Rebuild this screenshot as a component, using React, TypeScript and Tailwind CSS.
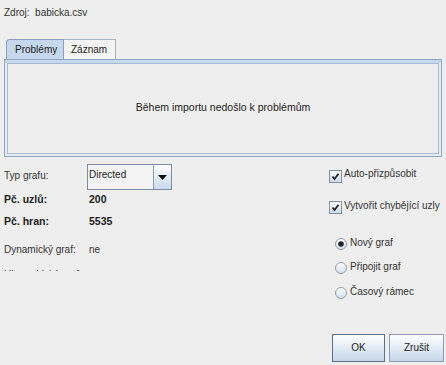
import React from "react";

const font = { fontFamily: '"Liberation Sans", Arial, sans-serif' };

function Checkbox() {
  return (
    <svg width="13" height="13" viewBox="0 0 13 13" className="shrink-0">
      <defs>
        <linearGradient id="cbg" x1="0" y1="0" x2="0" y2="1">
          <stop offset="0" stopColor="#ffffff" />
          <stop offset="1" stopColor="#c9d8ea" />
        </linearGradient>
      </defs>
      <rect x="0.5" y="0.5" width="12" height="12" fill="url(#cbg)" stroke="#7f8fa4" />
      <path d="M3.5 6.5 L5.5 9 L9.5 3.8" fill="none" stroke="#222" strokeWidth="1.8" />
    </svg>
  );
}

function Radio({ on }: { on?: boolean }) {
  return (
    <svg width="12" height="12" viewBox="0 0 12 12" className="shrink-0">
      <defs>
        <linearGradient id="rbg" x1="0" y1="0" x2="0" y2="1">
          <stop offset="0" stopColor="#ffffff" />
          <stop offset="1" stopColor="#d3deeb" />
        </linearGradient>
      </defs>
      <circle cx="6" cy="6" r="5.5" fill="url(#rbg)" stroke="#8e9db0" />
      {on && <circle cx="6" cy="6" r="2.8" fill="#222" />}
    </svg>
  );
}

export default function App() {
  return (
    <div
      className="w-[446px] h-[365px] bg-[#eeeeee] overflow-hidden text-[10px] text-[#333333] flex flex-col"
      style={font}
    >
      <div className="h-[26px] pl-[4px] pt-[7px] leading-[12px]">Zdroj:&nbsp; babicka.csv</div>

      <div className="mt-[13px] px-[4px]">
        <div className="flex pl-[2px] h-[20px]">
          <div className="w-[58px] border border-b-0 border-[#8ca0bd] bg-[#c5d8ee] rounded-tl-[4px] flex items-center pl-[8px] pb-[1px] text-[#222]">
            Problémy
          </div>
          <div className="w-[52px] border border-b-0 border-l-0 border-[#a9b4c2] bg-[#f4f4f4] flex items-center pl-[7px] pb-[1px] text-[#222]">
            Záznam
          </div>
        </div>
        <div className="h-[98px] border border-[#92a6c2] bg-[#e6ebf2] flex flex-col px-[2px] pb-[2px]">
          <div className="h-[3px] bg-[#c5d8ee] -mx-[2px]" />
          <div className="flex-1 border border-[#a8bad2] bg-[#eeeeee] flex items-center justify-center pb-[2px] text-[#222] text-[10.5px]">
            Během importu nedošlo k problémům
          </div>
        </div>
      </div>

      <div className="flex mt-[7px] h-[160px]">
        <div className="w-[320px] h-[107px] overflow-hidden pl-[4px] flex flex-col">
          <div className="h-[26px] flex items-center shrink-0">
            <div className="w-[83px] pb-[3px]">Typ grafu:</div>
            <div className="w-[85px] h-[26px] border border-[#7d8c9e] bg-[#f3f3f3] flex">
              <div className="flex-1 pl-[1px] pt-[4px] leading-[12px] text-[#222]">Directed</div>
              <div className="w-[18px] border-l border-[#8d9bad] bg-gradient-to-b from-[#ffffff] to-[#c9d9ec] flex items-center justify-center">
                <svg width="9" height="5" viewBox="0 0 9 5">
                  <path d="M0 0 H9 L4.5 5 Z" fill="#111" />
                </svg>
              </div>
            </div>
          </div>
          <div className="h-[20px] flex items-center shrink-0 font-bold text-[#222] text-[10.5px]">
            <div className="w-[85px]">Pč. uzlů:</div>
            <div>200</div>
          </div>
          <div className="h-[24px] flex items-center shrink-0 font-bold text-[#222] text-[10.5px]">
            <div className="w-[85px]">Pč. hran:</div>
            <div>5535</div>
          </div>
          <div className="h-[30px] flex items-center shrink-0">
            <div className="w-[85px]">Dynamický graf:</div>
            <div>ne</div>
          </div>
          <div className="h-[16px] flex items-start pt-[5px] leading-[12px] shrink-0">
            <div className="w-[85px]">Hierarchický graf:</div>
            <div>ne</div>
          </div>
        </div>

        <div className="flex-1 flex flex-col pl-[9px]">
          <div className="h-[20px] flex items-center gap-[2px] mt-[2px]">
            <Checkbox />
            <span className="pb-[5px]">Auto-přizpůsobit</span>
          </div>
          <div className="h-[20px] flex items-center gap-[2px] mt-[11px]">
            <Checkbox />
            <span className="pb-[4px]">Vytvořit chybějící uzly</span>
          </div>
          <div className="flex flex-col pl-[6px] mt-[15px]">
            <div className="h-[24px] flex items-center gap-[3px]">
              <Radio on />
              <span className="pb-[4px]">Nový graf</span>
            </div>
            <div className="h-[24px] flex items-center gap-[3px]">
              <Radio />
              <span className="pb-[4px]">Připojit graf</span>
            </div>
            <div className="h-[24px] flex items-center gap-[3px] mt-[1px]">
              <Radio />
              <span className="pb-[4px]">Časový rámec</span>
            </div>
          </div>
        </div>
      </div>

      <div className="flex justify-end gap-[4px] pr-[2px] mt-[10px]">
        <button className="w-[53px] h-[28px] border border-[#5f6f84] bg-gradient-to-b from-[#ffffff] to-[#c6d7ea] text-[#222] pb-[2px]">
          OK
        </button>
        <button className="w-[55px] h-[28px] border border-[#8d9cb0] bg-gradient-to-b from-[#ffffff] to-[#c6d7ea] text-[#222] pb-[2px]">
          Zrušit
        </button>
      </div>
    </div>
  );
}
